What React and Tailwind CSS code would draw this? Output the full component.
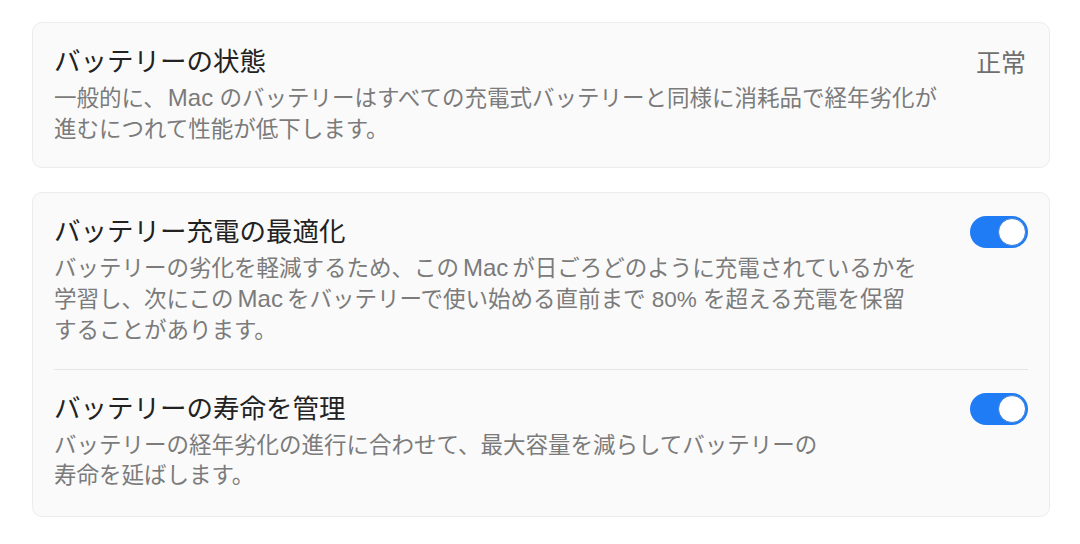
import React from 'react';

const Toggle = ({ on = true }) => (
  <div
    className={`relative w-[58px] h-[32px] rounded-full shrink-0 ${
      on ? 'bg-[#1f7cf5]' : 'bg-[#e3e3e3]'
    }`}
  >
    <div
      className={`absolute top-[2px] w-[28px] h-[28px] rounded-full bg-white border border-[#3d7fd6] ${
        on ? 'right-[2px]' : 'left-[2px]'
      }`}
    />
  </div>
);

// Latin words set a touch larger so they sit like the system font next to kana
const Mac = ({ gap = 'mx-[4px]' }) => (
  <span className={`text-[24px] leading-none ${gap}`}>Mac</span>
);

const SettingRow = ({ title, lines, right }) => (
  <div className="flex items-start justify-between py-[22px]">
    <div className="flex flex-col">
      <div className="text-[26.5px] leading-[34px] text-[#222222]">{title}</div>
      <p className="mt-[5px] text-[22.5px] leading-[30.7px] text-[#7b7b7b] whitespace-nowrap">
        {lines.map((line, i) => (
          <React.Fragment key={i}>
            {line}
            {i < lines.length - 1 && <br />}
          </React.Fragment>
        ))}
      </p>
    </div>
    <div className="pt-[1px]">{right}</div>
  </div>
);

export default function App() {
  return (
    <div className="w-[1080px] h-[544px] bg-white pt-[22px] pl-[32px] font-['Liberation_Sans','Noto_Sans_CJK_JP',sans-serif]">
      {/* Battery health */}
      <div className="w-[1018px] rounded-[10px] bg-[#fafafa] border border-[#ececec] px-[21px]">
        <SettingRow
          title="バッテリーの状態"
          lines={[
            <>一般的に、<Mac gap="ml-[2px]" /> のバッテリーはすべての充電式バッテリーと同様に消耗品で経年劣化が</>,
            '進むにつれて性能が低下します。',
          ]}
          right={<span className="block mr-[2px] text-[25px] leading-[34px] text-[#6f6f6f]">正常</span>}
        />
      </div>

      {/* Charging options */}
      <div className="mt-[24px] w-[1018px] rounded-[10px] bg-[#fafafa] border border-[#ececec] px-[21px] pb-[2px]">
        <SettingRow
          title="バッテリー充電の最適化"
          lines={[
            <>バッテリーの劣化を軽減するため、この<Mac />が日ごろどのように充電されているかを</>,
            <>学習し、次にこの<Mac />をバッテリーで使い始める直前まで 80% を超える充電を保留</>,
            'することがあります。',
          ]}
          right={<Toggle />}
        />
        <div className="h-px bg-[#e6e6e6]" />
        <SettingRow
          title="バッテリーの寿命を管理"
          lines={[
            'バッテリーの経年劣化の進行に合わせて、最大容量を減らしてバッテリーの',
            '寿命を延ばします。',
          ]}
          right={<Toggle />}
        />
      </div>
    </div>
  );
}
